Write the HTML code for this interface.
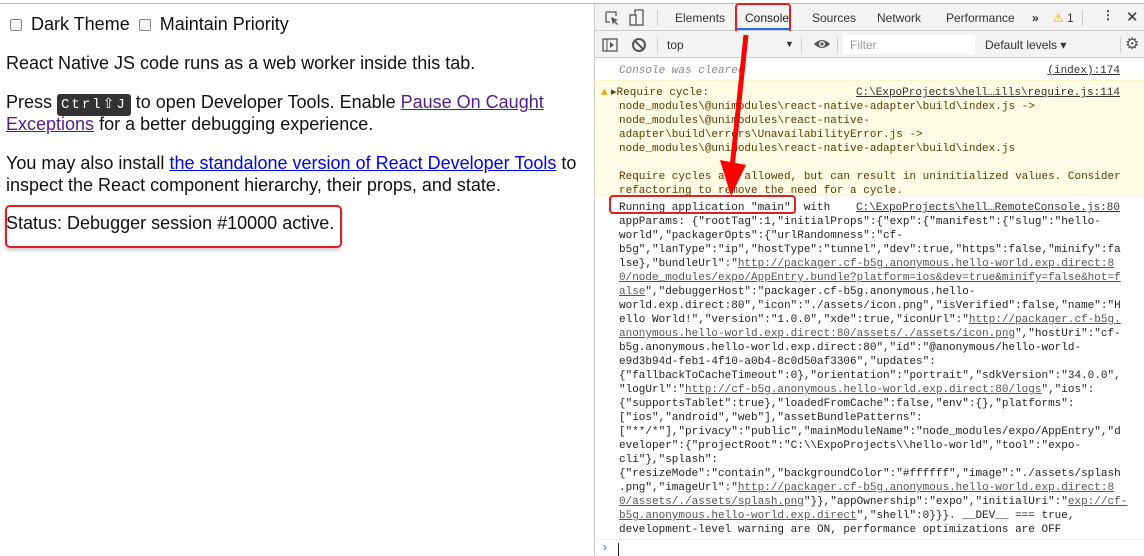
<!DOCTYPE html>
<html><head><meta charset="utf-8"><style>
*{margin:0;padding:0;box-sizing:border-box}
body{width:1144px;height:555px;overflow:hidden;background:#fff;position:relative;font-family:"Liberation Sans",Arial,sans-serif}
.top{position:absolute;left:0;top:0;width:1144px;height:4px;border-bottom:1px solid #bbb;background:#fff}
.left{position:absolute;left:0;top:4px;width:594px;height:551px;font-size:18px;color:#111}
.l{position:absolute;left:6px;white-space:nowrap}
a{text-decoration:underline}
.cb{display:inline-block;width:12px;height:12px;border:1px solid #888;border-radius:2px;background:#f4f4f4;vertical-align:-1px;margin:0 4px 0 4px}
.kbd{display:inline-block;background:#333;color:#fff;font-family:"Liberation Mono",monospace;font-size:14px;padding:2px 4px;border-radius:3px;letter-spacing:2px;line-height:18px}
.dev{position:absolute;left:594px;top:4px;width:550px;height:551px;border-left:1px solid #ccc;background:#fff;font-family:"Liberation Sans",Arial,sans-serif}
.tabs{height:27px;background:#f3f3f3;border-bottom:1px solid #ccc;position:relative;font-size:12px;color:#333}
.tabs span{position:absolute;top:7px}
.tb{position:absolute;top:27px;height:27px;width:550px;background:#f3f3f3;border-bottom:1px solid #ccc;font-size:12px;color:#333}
.tb span{position:absolute;top:7px}
.mono{font-family:"Liberation Mono",monospace;font-size:11px;color:#222;white-space:pre;line-height:14px}
.ml{position:absolute;left:24px}
.src{position:absolute;right:24px;color:#333;text-decoration:underline}
.warn{position:absolute;left:0;top:76px;width:549px;height:116px;background:#fffbe5;border-top:1px solid #fff5c2;border-bottom:1px solid #fff5c2;color:#5c3b00}
u{color:#555}
</style></head><body>
<div class="top"></div>
<div class="left">
<div class="l" style="top:10px"><span class="cb" style="margin-left:4px"></span> Dark Theme <span class="cb"></span> Maintain Priority</div>
<div class="l" style="top:49px">React Native JS code runs as a web worker inside this tab.</div>
<div class="l" style="top:88px">Press <span class="kbd">Ctrl⇧J</span> to open Developer Tools. Enable <a style="color:#551a8b">Pause On Caught</a></div>
<div class="l" style="top:110px"><a style="color:#551a8b">Exceptions</a> for a better debugging experience.</div>
<div class="l" style="top:149px">You may also install <a style="color:#0000ee">the standalone version of React Developer Tools</a> to</div>
<div class="l" style="top:171px">inspect the React component hierarchy, their props, and state.</div>
<div class="l" style="top:209px">Status: Debugger session #10000 active.</div>
<div style="position:absolute;left:5px;top:201px;width:337px;height:43px;border:2px solid #e02020;border-radius:5px;box-shadow:0 2px 4px rgba(0,0,0,.25)"></div>
</div>
<div class="dev">
<div class="tabs">
<svg style="position:absolute;left:9px;top:6px" width="16" height="16"><path d="M2 2h10v4M2 2v10h4" fill="none" stroke="#555" stroke-width="1.3"/><path d="M7 7l7 3-3 1 3 3-1 1-3-3-1 3z" fill="#555"/></svg>
<svg style="position:absolute;left:34px;top:5px" width="16" height="18"><rect x="6" y="1" width="8" height="15" fill="none" stroke="#555" stroke-width="1.3"/><rect x="1" y="6" width="6" height="10" fill="#f3f3f3" stroke="#555" stroke-width="1.3"/></svg>
<div style="position:absolute;left:62px;top:6px;width:1px;height:16px;background:#ccc"></div>
<span style="left:80px">Elements</span>
<span style="left:150px;color:#222">Console</span>
<div style="position:absolute;left:140px;top:24px;width:55px;height:2px;background:#1a73e8"></div>
<span style="left:217px">Sources</span>
<span style="left:282px">Network</span>
<span style="left:351px">Performance</span>
<span style="left:437px;font-weight:bold">»</span>
<span style="left:458px;color:#e6a800">⚠</span><span style="left:472px">1</span>
<div style="position:absolute;left:487px;top:6px;width:1px;height:16px;background:#ccc"></div>
<span style="left:507px;font-weight:bold;top:4px">⋮</span>
<span style="left:531px;font-size:15px;top:4px">✕</span>
<div style="position:absolute;left:140px;top:-1px;width:56px;height:33px;border:2px solid #e02020;border-radius:4px"></div>
</div>
<div class="tb">
<svg style="position:absolute;left:7px;top:6px" width="16" height="16"><rect x="1" y="2" width="14" height="12" fill="none" stroke="#555" stroke-width="1.3"/><path d="M5 2v12" stroke="#555"/><path d="M8 5l4 3-4 3z" fill="#555"/></svg>
<svg style="position:absolute;left:36px;top:6px" width="16" height="16"><circle cx="8" cy="8" r="6" fill="none" stroke="#555" stroke-width="2"/><path d="M4 4l8 8" stroke="#555" stroke-width="2"/></svg>
<div style="position:absolute;left:62px;top:6px;width:1px;height:16px;background:#ccc"></div>
<span style="left:72px">top</span>
<span style="left:190px;font-size:9px;top:8px">▼</span>
<div style="position:absolute;left:206px;top:6px;width:1px;height:16px;background:#ccc"></div>
<svg style="position:absolute;left:218px;top:7px" width="18" height="12"><path d="M1 6Q9-2 17 6Q9 14 1 6z" fill="#555"/><circle cx="9" cy="6" r="3" fill="#f3f3f3"/><circle cx="9" cy="6" r="1.6" fill="#555"/></svg>
<div style="position:absolute;left:242px;top:6px;width:1px;height:16px;background:#ccc"></div>
<div style="position:absolute;left:248px;top:4px;width:132px;height:19px;background:#fff"></div>
<span style="left:255px;color:#999">Filter</span>
<span style="left:390px">Default levels ▾</span>
<div style="position:absolute;left:525px;top:6px;width:1px;height:16px;background:#ccc"></div>
<span style="left:530px;font-size:16px;top:3px;color:#555">⚙</span>
</div>
<div class="mono" style="position:absolute;top:60px;left:0;width:549px;height:14px"><span class="ml" style="color:#888;font-style:italic">Console was cleared</span><span class="src">(index):174</span></div>
<div class="warn mono">
<span style="position:absolute;left:6px;top:5px;color:#e6a800;font-size:11px">▲</span>
<div class="ml" style="top:5px;left:16px">▸Require cycle:</div><span class="src" style="top:5px">C:\ExpoProjects\hell…ills\require.js:114</span>
<div class="ml" style="top:19px">node_modules\@unimodules\react-native-adapter\build\index.js -&gt;
node_modules\@unimodules\react-native-
adapter\build\errors\UnavailabilityError.js -&gt;
node_modules\@unimodules\react-native-adapter\build\index.js

Require cycles are allowed, but can result in uninitialized values. Consider
refactoring to remove the need for a cycle.</div>
</div>
<div class="mono" style="position:absolute;top:197px;left:0;width:549px">
<span class="src" style="top:0">C:\ExpoProjects\hell…RemoteConsole.js:80</span>
<div class="ml" style="top:0">Running application "main"  with
appParams: {"rootTag":1,"initialProps":{"exp":{"manifest":{"slug":"hello-
world","packagerOpts":{"urlRandomness":"cf-
b5g","lanType":"ip","hostType":"tunnel","dev":true,"https":false,"minify":fa
lse},"bundleUrl":"<u>http://packager.cf-b5g.anonymous.hello-world.exp.direct:8</u>
<u>0/node_modules/expo/AppEntry.bundle?platform=ios&amp;dev=true&amp;minify=false&amp;hot=f</u>
<u>alse</u>","debuggerHost":"packager.cf-b5g.anonymous.hello-
world.exp.direct:80","icon":"./assets/icon.png","isVerified":false,"name":"H
ello World!","version":"1.0.0","xde":true,"iconUrl":"<u>http://packager.cf-b5g.</u>
<u>anonymous.hello-world.exp.direct:80/assets/./assets/icon.png</u>","hostUri":"cf-
b5g.anonymous.hello-world.exp.direct:80","id":"@anonymous/hello-world-
e9d3b94d-feb1-4f10-a0b4-8c0d50af3306","updates":
{"fallbackToCacheTimeout":0},"orientation":"portrait","sdkVersion":"34.0.0",
"logUrl":"<u>http://cf-b5g.anonymous.hello-world.exp.direct:80/logs</u>","ios":
{"supportsTablet":true},"loadedFromCache":false,"env":{},"platforms":
["ios","android","web"],"assetBundlePatterns":
["**/*"],"privacy":"public","mainModuleName":"node_modules/expo/AppEntry","d
eveloper":{"projectRoot":"C:\\ExpoProjects\\hello-world","tool":"expo-
cli"},"splash":
{"resizeMode":"contain","backgroundColor":"#ffffff","image":"./assets/splash
.png","imageUrl":"<u>http://packager.cf-b5g.anonymous.hello-world.exp.direct:8</u>
<u>0/assets/./assets/splash.png</u>"}},"appOwnership":"expo","initialUri":"<u>exp://cf-</u>
<u>b5g.anonymous.hello-world.exp.direct</u>","shell":0}}}. __DEV__ === true,
development-level warning are ON, performance optimizations are OFF</div>
</div>
<div style="position:absolute;left:0;top:535px;width:549px;border-top:1px solid #eee;height:16px"><span style="position:absolute;left:8px;top:0;color:#1a73e8;font-size:12px">›</span><span style="position:absolute;left:23px;top:3px;width:1px;height:13px;background:#222"></span></div>
<div style="position:absolute;left:14px;top:191px;width:187px;height:19px;border:2px solid #e02020;border-radius:4px"></div>
</div>
<svg style="position:absolute;left:0;top:0" width="1144" height="555"><path d="M746 35L732 168" stroke="#f00" stroke-width="5"/><path d="M720 160L731 196L746 165z" fill="#f00"/></svg>
</body></html>
